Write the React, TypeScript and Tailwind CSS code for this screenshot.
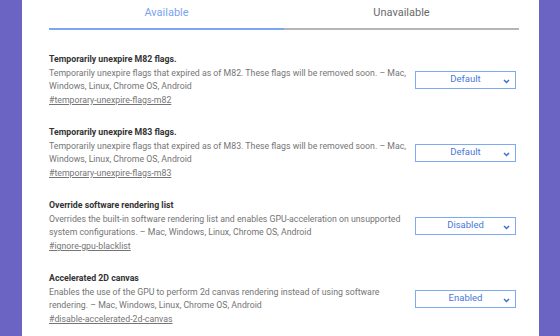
import React from "react";

type Flag = {
  title: string;
  desc: string;
  link: string;
  value: string;
};

const flags: Flag[] = [
  {
    title: "Temporarily unexpire M82 flags.",
    desc: "Temporarily unexpire flags that expired as of M82. These flags will be removed soon. – Mac, Windows, Linux, Chrome OS, Android",
    link: "#temporary-unexpire-flags-m82",
    value: "Default",
  },
  {
    title: "Temporarily unexpire M83 flags.",
    desc: "Temporarily unexpire flags that expired as of M83. These flags will be removed soon. – Mac, Windows, Linux, Chrome OS, Android",
    link: "#temporary-unexpire-flags-m83",
    value: "Default",
  },
  {
    title: "Override software rendering list",
    desc: "Overrides the built-in software rendering list and enables GPU-acceleration on unsupported system configurations. – Mac, Windows, Linux, Chrome OS, Android",
    link: "#ignore-gpu-blacklist",
    value: "Disabled",
  },
  {
    title: "Accelerated 2D canvas",
    desc: "Enables the use of the GPU to perform 2d canvas rendering instead of using software rendering. – Mac, Windows, Linux, Chrome OS, Android",
    link: "#disable-accelerated-2d-canvas",
    value: "Enabled",
  },
];

function Chevron() {
  return (
    <svg width="7" height="5" viewBox="0 0 7 5" className="absolute right-[5px] top-[7px]">
      <path d="M1 1 L3.5 3.5 L6 1" fill="none" stroke="#3f6fd0" strokeWidth="1.5" />
    </svg>
  );
}

export default function App() {
  return (
    <div
      className="flex w-[560px] h-[336px] overflow-hidden bg-[#6b64c3]"
      style={{ fontFamily: "Roboto, 'Liberation Sans', sans-serif" }}
    >
      <div className="w-[22px] shrink-0" />
      <div className="w-[517px] shrink-0 bg-white pl-[27px] pr-[20px]">
        <div className="flex h-[30px]">
          <div className="flex-1 flex items-center justify-center border-b-2 border-[#7aa6f4] text-[11px] text-[#7aa3f2] pb-[1px]">
            Available
          </div>
          <div className="flex-1 flex items-center justify-center border-b-2 border-[#b5b5b5] text-[11px] text-[#6a6a6a] pb-[1px]">
            Unavailable
          </div>
        </div>
        <div className="flex flex-col gap-[18px] pt-[22px]">
          {flags.map((f) => (
            <div key={f.link} className="flex items-center justify-between">
              <div className="w-[362px]">
                <div className="text-[8.75px] leading-[15px] font-bold text-[#333]">{f.title}</div>
                <div className="text-[8.75px] leading-[13px] text-[#757575]">{f.desc}</div>
                <div className="mt-[1px] text-[8.75px] leading-[13px] text-[#757575] underline">{f.link}</div>
              </div>
              <div className="relative mr-[3px] w-[101px] h-[18px] border border-[#7fa9f0] flex items-center justify-center text-[9.5px] text-[#4a78d9]">
                {f.value}
                <Chevron />
              </div>
            </div>
          ))}
        </div>
      </div>
      <div className="flex-1" />
    </div>
  );
}
